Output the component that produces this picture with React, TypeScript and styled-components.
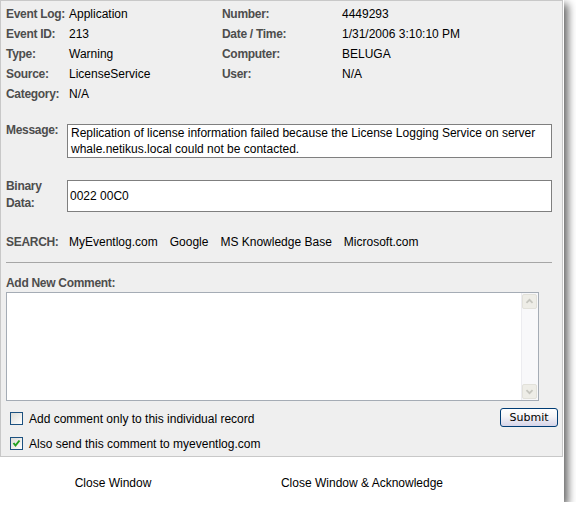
import React from "react";
import styled, { createGlobalStyle } from "styled-components";

const GlobalStyle = createGlobalStyle`
  html, body {
    margin: 0;
    padding: 0;
    background: #ffffff;
  }
  body {
    font-family: "Liberation Sans", Arial, sans-serif;
    font-size: 12px;
    color: #000000;
  }
`;

const info = [
  ["Event Log:", "Application", "Number:", "4449293"],
  ["Event ID:", "213", "Date / Time:", "1/31/2006 3:10:10 PM"],
  ["Type:", "Warning", "Computer:", "BELUGA"],
  ["Source:", "LicenseService", "User:", "N/A"],
  ["Category:", "N/A", "", ""],
];

const searchLinks = ["MyEventlog.com", "Google", "MS Knowledge Base", "Microsoft.com"];

const Chevron = ({ down }: { down?: boolean }) => (
  <svg width="15" height="15" viewBox="0 0 15 15">
    <polyline
      points={down ? "4,6 7.5,9.5 11,6" : "4,9 7.5,5.5 11,9"}
      fill="none"
      stroke="#c6c6bf"
      strokeWidth="2"
    />
  </svg>
);

const Tick = () => (
  <svg width="11" height="11" viewBox="0 0 11 11">
    <polyline points="2.5,5 4.5,7.5 8.5,2.5" fill="none" stroke="#21a121" strokeWidth="2" />
  </svg>
);

const App = () => {
  return (
    <>
      <GlobalStyle />
      <Window>
        <Panel>
          <InfoGrid>
            {info.map((row) => (
              <React.Fragment key={row[0]}>
                <Label>{row[0]}</Label>
                <Value>{row[1]}</Value>
                <Label>{row[2]}</Label>
                <Value>{row[3]}</Value>
              </React.Fragment>
            ))}
          </InfoGrid>

          <FieldRow $top={20}>
            <FieldLabel>Message:</FieldLabel>
            <MessageBox>
              Replication of license information failed because the License Logging Service on server
              whale.netikus.local could not be contacted.
            </MessageBox>
          </FieldRow>

          <FieldRow $top={22}>
            <FieldLabel>
              Binary
              <br />
              Data:
            </FieldLabel>
            <BinaryBox>0022 00C0</BinaryBox>
          </FieldRow>

          <SearchRow>
            <SearchLabel>SEARCH:</SearchLabel>
            {searchLinks.map((l) => (
              <SearchLink key={l}>{l}</SearchLink>
            ))}
          </SearchRow>

          <Divider />

          <CommentLabel>Add New Comment:</CommentLabel>
          <CommentBox>
            <CommentInput />
            <ScrollTrack>
              <ScrollButton>
                <Chevron />
              </ScrollButton>
              <ScrollButton>
                <Chevron down />
              </ScrollButton>
            </ScrollTrack>
          </CommentBox>

          <OptionRow $first>
            <CheckLine>
              <CheckBox />
              Add comment only to this individual record
            </CheckLine>
            <SubmitButton>Submit</SubmitButton>
          </OptionRow>
          <OptionRow>
            <CheckLine>
              <CheckBox>
                <Tick />
              </CheckBox>
              Also send this comment to myeventlog.com
            </CheckLine>
          </OptionRow>
        </Panel>

        <Footer>
          <FooterButton>Close Window</FooterButton>
          <FooterButton>Close Window &amp; Acknowledge</FooterButton>
        </Footer>
      </Window>
    </>
  );
};

const Window = styled.div`
  width: 564px;
  height: 502px;
  background: #ffffff;
  box-shadow: 4px 4px 8px rgba(0, 0, 0, 0.6);
  display: flex;
  flex-direction: column;
`;

const Panel = styled.div`
  width: 563px;
  height: 457px;
  box-sizing: border-box;
  background: #efefef;
  border: 1px solid #c8c8c8;
  padding: 3px 10px 0 5px;
`;

const InfoGrid = styled.div`
  display: grid;
  grid-template-columns: 63px 153px 120px 1fr;
  grid-auto-rows: 20px;
  align-items: center;
`;

const Label = styled.div`
  font-weight: bold;
  color: #4d4d4d;
  white-space: nowrap;
  letter-spacing: -0.3px;
`;

const Value = styled.div`
  color: #000000;
  white-space: nowrap;
`;

const FieldRow = styled.div<{ $top: number }>`
  display: flex;
  align-items: flex-start;
  margin-top: ${(p) => p.$top}px;
`;

const FieldLabel = styled.div`
  width: 61px;
  flex-shrink: 0;
  font-weight: bold;
  color: #4d4d4d;
  line-height: 17px;
  margin-top: -2px;
  letter-spacing: -0.3px;
`;

const MessageBox = styled.div`
  flex: 1;
  background: #ffffff;
  border: 1px solid #7f7f7f;
  padding: 0 0 0 3px;
  line-height: 16px;
`;

const BinaryBox = styled.div`
  flex: 1;
  height: 32px;
  box-sizing: border-box;
  display: flex;
  align-items: center;
  background: #ffffff;
  border: 1px solid #7f7f7f;
  padding: 0 0 0 2px;
`;

const SearchRow = styled.div`
  display: flex;
  align-items: center;
  height: 20px;
  margin-top: 20px;
  gap: 12px;
`;

const SearchLabel = styled.div`
  width: 51px;
  font-weight: bold;
  color: #4d4d4d;
  letter-spacing: -0.3px;
`;

const SearchLink = styled.span`
  color: #000000;
  cursor: pointer;
  white-space: nowrap;
`;

const Divider = styled.div`
  height: 1px;
  background: #a6a6a6;
  margin-top: 10px;
`;

const CommentLabel = styled.div`
  font-weight: bold;
  color: #4d4d4d;
  line-height: 16px;
  margin-top: 12px;
  letter-spacing: -0.3px;
`;

const CommentBox = styled.div`
  width: 533px;
  height: 109px;
  box-sizing: border-box;
  margin-top: 1px;
  display: flex;
  background: #ffffff;
  border: 1px solid #a5acb5;
`;

const CommentInput = styled.textarea`
  flex: 1;
  border: none;
  outline: none;
  resize: none;
  overflow: hidden;
  background: transparent;
  font-family: "Liberation Sans", Arial, sans-serif;
  font-size: 12px;
`;

const ScrollTrack = styled.div`
  width: 16px;
  display: flex;
  flex-direction: column;
  justify-content: space-between;
  background: #f8f8fa;
  border-left: 1px solid #ececf0;
  padding: 1px 0;
`;

const ScrollButton = styled.div`
  width: 15px;
  height: 15px;
  box-sizing: border-box;
  display: flex;
  align-items: center;
  justify-content: center;
  background: #eeede7;
  border: 1px solid #e2e1da;
  border-radius: 2px;
  svg {
    display: block;
  }
`;

const OptionRow = styled.div<{ $first?: boolean }>`
  display: flex;
  align-items: center;
  justify-content: space-between;
  height: 25px;
  margin-top: ${(p) => (p.$first ? "5px" : "0")};
`;

const CheckLine = styled.label`
  display: flex;
  align-items: center;
  gap: 6px;
  padding-left: 4px;
  color: #000000;
`;

const CheckBox = styled.span`
  width: 13px;
  height: 13px;
  box-sizing: border-box;
  display: flex;
  align-items: center;
  justify-content: center;
  border: 1px solid #1c5180;
  background: linear-gradient(135deg, #dcdcd7 0%, #ffffff 100%);
`;

const SubmitButton = styled.button`
  width: 58px;
  height: 19px;
  margin-right: -6px;
  margin-top: -3px;
  padding: 0;
  border: 1px solid #003c74;
  border-radius: 3px;
  background: linear-gradient(to bottom, #ffffff 0%, #f4f4f6 45%, #d6d4e8 100%);
  font-family: "DejaVu Sans", Tahoma, sans-serif;
  font-size: 11px;
  color: #000000;
`;

const Footer = styled.div`
  display: grid;
  grid-template-columns: 226px 272px;
  padding-top: 18px;
`;

const FooterButton = styled.button`
  border: none;
  background: transparent;
  padding: 0;
  line-height: 16px;
  text-align: center;
  font-family: "Liberation Sans", Arial, sans-serif;
  font-size: 12px;
  color: #000000;
  cursor: pointer;
`;

export default App;
